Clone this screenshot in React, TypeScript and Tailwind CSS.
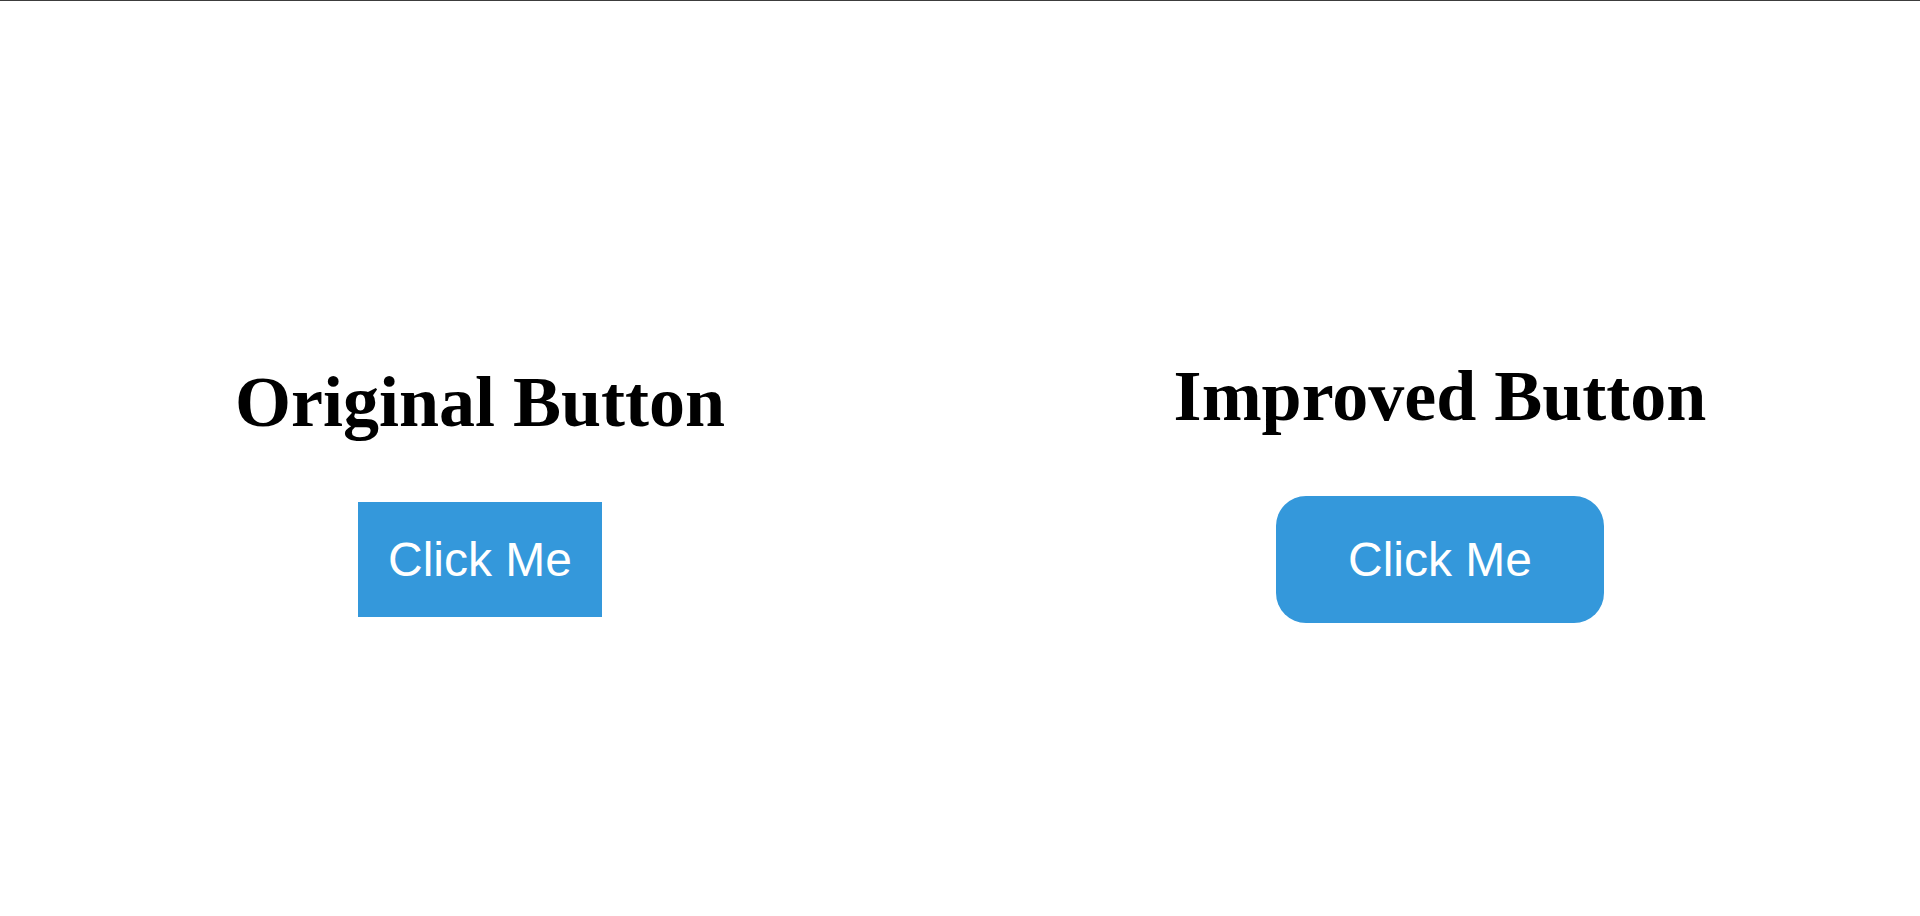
export default function App() {
  return (
    <div
      className="grid h-[916px] grid-cols-2 border-t border-[#3c3c3c] bg-white"
      style={{ fontFamily: '"Liberation Serif", serif' }}
    >
      {/* Original */}
      <div className="flex flex-col items-center justify-center">
        <h1 className="mt-[62px] text-[72px] font-bold leading-[80px] text-black">Original Button</h1>
        <button className="mt-[60px] bg-[#3498db] px-[30px] py-[30px] font-['Liberation_Sans',sans-serif] text-[48px] leading-[55px] text-white">
          Click Me
        </button>
      </div>

      {/* Improved */}
      <div className="flex flex-col items-center justify-center">
        <h1 className="mt-[62px] text-[72px] font-bold leading-[80px] text-black">Improved Button</h1>
        <button className="mt-[60px] rounded-[30px] bg-[#3498db] px-[72px] py-[36px] font-['Liberation_Sans',sans-serif] text-[48px] leading-[55px] text-white">
          Click Me
        </button>
      </div>
    </div>
  );
}
